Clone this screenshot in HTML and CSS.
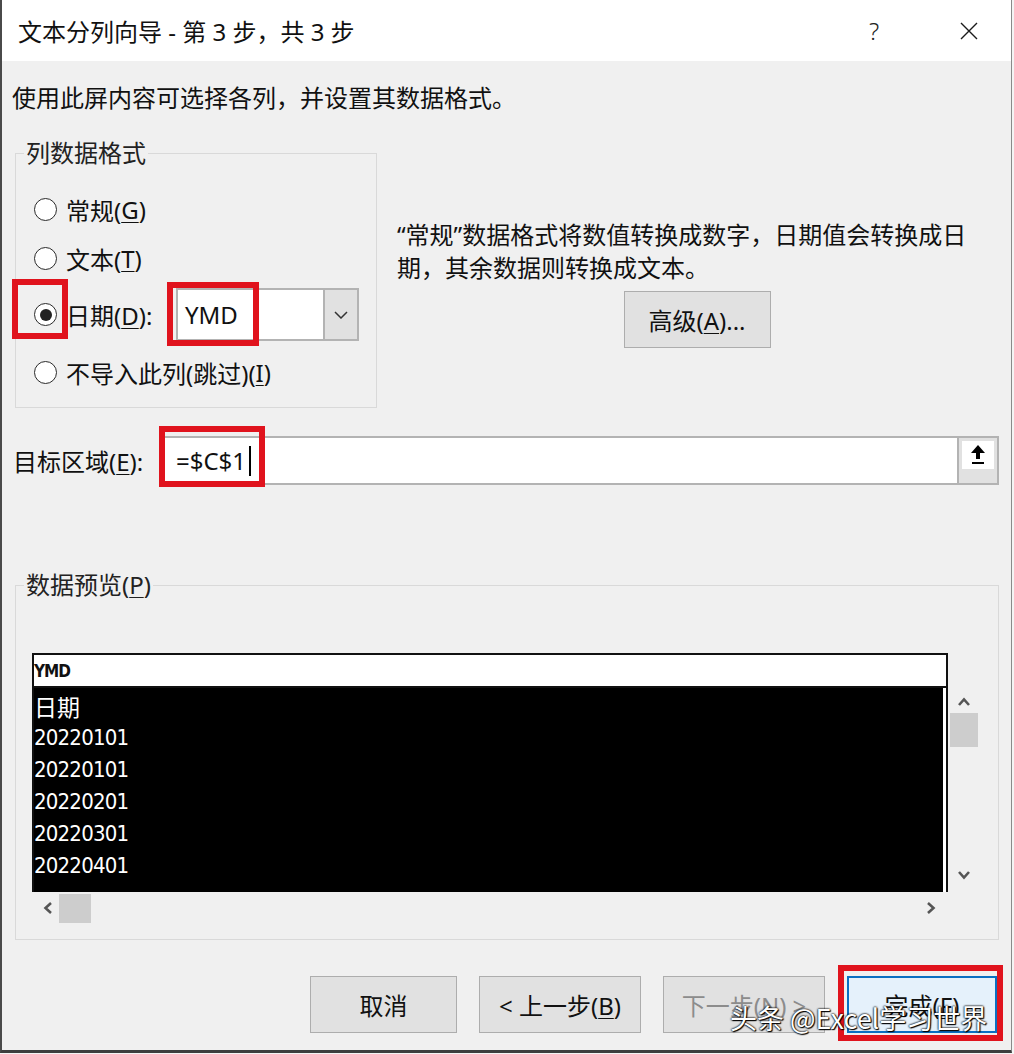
FILE: index.html
```html
<!DOCTYPE html>
<html lang="zh-CN">
<head>
    <meta charset="UTF-8">
    <title>文本分列向导 - 第 3 步，共 3 步</title>
    <link rel="stylesheet" href="styles.css">
</head>
<body>
    <div class="dialog">
        <div class="titlebar">
            <span class="title">文本分列向导 - 第 3 步，共 3 步</span>
            <span class="help">?</span>
            <span class="close">
                <svg width="20" height="18" viewBox="0 0 20 18"><path d="M2 1 L18 17 M18 1 L2 17" stroke="#1b1b1b" stroke-width="1.4" fill="none"/></svg>
            </span>
        </div>

        <div class="content">
            <p class="intro">使用此屏内容可选择各列，并设置其数据格式。</p>

            <div class="format-row">
                <fieldset class="group format-group">
                    <legend>列数据格式</legend>
                    <div class="radio-row row-a"><span class="radio"></span>常规(<u>G</u>)</div>
                    <div class="radio-row row-b"><span class="radio"></span>文本(<u>T</u>)</div>
                    <div class="radio-row row-c">
                        <span class="radio checked mark-radio"></span>
                        <span class="date-label">日期(<u>D</u>):</span>
                        <div class="combo">
                            <span class="combo-text">YMD</span>
                            <span class="combo-btn">
                                <svg width="14" height="8" viewBox="0 0 14 8"><path d="M1 1 L7 7 L13 1" stroke="#333" stroke-width="1.5" fill="none"/></svg>
                            </span>
                        </div>
                    </div>
                    <div class="radio-row row-d"><span class="radio"></span>不导入此列(跳过)(<u>I</u>)</div>
                </fieldset>

                <div class="format-note">
                    <p>“常规”数据格式将数值转换成数字，日期值会转换成日期，其余数据则转换成文本。</p>
                    <button class="btn btn-adv">高级(<u>A</u>)...</button>
                </div>
            </div>

            <div class="dest-row">
                <span class="dest-label">目标区域(<u>E</u>):</span>
                <div class="dest-input">
                    <span class="dest-text">=$C$1</span><span class="caret"></span>
                    <span class="collapse-btn">
                        <span class="collapse-face">
                            <svg width="20" height="24" viewBox="0 0 20 24"><path d="M10 2 L3 10 L8 10 L8 16 L12 16 L12 10 L17 10 Z" fill="#000"/><rect x="4" y="19" width="12" height="2" fill="#000"/></svg>
                        </span>
                    </span>
                </div>
            </div>

            <fieldset class="group preview-group">
                <legend>数据预览(<u>P</u>)</legend>
                <div class="preview">
                    <div class="preview-grid">
                        <div class="preview-head">YMD</div>
                        <div class="preview-body">
                            <div class="cell cell-cjk">日期</div>
                            <div class="cell">20220101</div>
                            <div class="cell">20220101</div>
                            <div class="cell">20220201</div>
                            <div class="cell">20220301</div>
                            <div class="cell">20220401</div>
                        </div>
                    </div>
                    <div class="vscroll">
                        <svg width="14" height="10" viewBox="0 0 14 10"><path d="M2 8 L7 2.5 L12 8" stroke="#555" stroke-width="2.6" fill="none"/></svg>
                        <span class="vthumb"></span>
                        <span class="vspace"></span>
                        <svg width="14" height="10" viewBox="0 0 14 10"><path d="M2 2 L7 7.5 L12 2" stroke="#555" stroke-width="2.6" fill="none"/></svg>
                    </div>
                </div>
                <div class="hscroll">
                    <svg width="10" height="14" viewBox="0 0 10 14"><path d="M8 2 L2.5 7 L8 12" stroke="#555" stroke-width="2.6" fill="none"/></svg>
                    <span class="hthumb"></span>
                    <span class="hspace"></span>
                    <svg width="10" height="14" viewBox="0 0 10 14"><path d="M2 2 L7.5 7 L2 12" stroke="#555" stroke-width="2.6" fill="none"/></svg>
                </div>
            </fieldset>

            <div class="buttons">
                <button class="btn btn-cancel">取消</button>
                <button class="btn btn-back">&lt; 上一步(<u>B</u>)</button>
                <button class="btn btn-next" disabled>下一步(<u>N</u>) &gt;</button>
                <button class="btn btn-finish">完成(<u>F</u>)</button>
            </div>
        </div>

        <div class="watermark">头条 @Excel学习世界</div>
    </div>
</body>
</html>
```

FILE: styles.css
```css
body {
    margin: 0;
    background: #f4f4f4;
    font-family: "Noto Sans", "Noto Sans CJK SC", sans-serif;
    color: #111;
}
u {
    text-decoration-thickness: 1px;
    text-underline-offset: 3px;
}
.dialog {
    position: relative;
    width: 1009px;
    height: 1050px;
    border-left: 2px solid #4a4a4a;
    border-right: 1px solid #8a8a8a;
    border-bottom: 3px solid #3e3e3e;
    background: #f0f0f0;
    overflow: hidden;
}

/* title bar */
.titlebar {
    height: 61px;
    background: #fff;
    display: flex;
    align-items: center;
    padding-left: 16px;
}
.title {
    font-size: 24px;
    flex: 1;
}
.help {
    font-size: 24px;
    font-weight: 300;
    color: #222;
    width: 90px;
}
.close {
    width: 52px;
    display: flex;
    align-items: center;
}

/* body */
.content {
    padding: 0 12px 0 13px;
}
.intro {
    margin: 20px 0 0 -3px;
    font-size: 24px;
    line-height: 34px;
}
.format-row {
    display: flex;
    margin-top: 23px;
}
.group {
    margin: 0;
    border: 1px solid #d9d9d9;
    padding: 0;
}
.group legend {
    font-size: 24px;
    line-height: 30px;
    padding: 0 2px;
    color: #222;
}
.format-group {
    width: 362px;
    box-sizing: border-box;
    height: 270px;
    padding: 17px 0 0 18px;
}
.format-group legend {
    margin-left: -10px;
}
.radio-row {
    display: flex;
    align-items: center;
    font-size: 24px;
}
.row-a, .row-b {
    height: 49px;
}
.row-c {
    height: 63px;
}
.row-d {
    height: 53px;
}
.radio {
    position: relative;
    width: 21px;
    height: 21px;
    border: 1.6px solid #2a2a2a;
    border-radius: 50%;
    background: #fff;
    margin-right: 9px;
    display: flex;
    align-items: center;
    justify-content: center;
}
.radio.checked::before {
    content: '';
    width: 12px;
    height: 12px;
    border-radius: 50%;
    background: #222;
}
.mark-radio::after {
    content: '';
    position: absolute;
    left: -23px;
    top: -25px;
    width: 44px;
    height: 48px;
    border: 6px solid #e0131d;
}
.date-label {
    width: 110px;
}
.combo {
    position: relative;
    display: flex;
    width: 183px;
    height: 53px;
    box-sizing: border-box;
    border: 2px solid #b3b3b3;
    background: #fff;
}
.combo::after {
    content: '';
    position: absolute;
    left: -11px;
    top: -8px;
    width: 80px;
    height: 52px;
    border: 6px solid #e0131d;
}
.combo-text {
    flex: 1;
    font-size: 24px;
    line-height: 49px;
    padding-left: 7px;
}
.combo-btn {
    width: 32px;
    background: #e1e1e1;
    border-left: 2px solid #b3b3b3;
    display: flex;
    align-items: center;
    justify-content: center;
}
.format-note {
    width: 600px;
    margin: 80px 0 0 20px;
    display: flex;
    flex-direction: column;
    align-items: center;
}
.format-note p {
    margin: 0;
    width: 580px;
    align-self: flex-start;
    font-size: 24px;
    line-height: 33px;
}
.btn {
    font-family: inherit;
    font-size: 24px;
    color: #111;
    background: #e1e1e1;
    border: 1px solid #adadad;
    padding: 0;
}
.btn-adv {
    margin-top: 7px;
    width: 147px;
    height: 57px;
}

/* destination */
.dest-row {
    display: flex;
    align-items: center;
    margin-top: 28px;
}
.dest-label {
    width: 146px;
    font-size: 24px;
    margin-left: -2px;
    margin-right: 3px;
}
.dest-input {
    position: relative;
    flex: 1;
    height: 49px;
    box-sizing: border-box;
    border: 2px solid #b3b3b3;
    background: #fff;
    display: flex;
    align-items: center;
}
.dest-input::after {
    content: '';
    position: absolute;
    left: -5px;
    top: -12px;
    width: 94px;
    height: 49px;
    border: 6px solid #e0131d;
}
.dest-text {
    font-size: 24px;
    padding-left: 12px;
}
.caret {
    width: 2px;
    height: 30px;
    background: #000;
    margin-left: 3px;
}
.collapse-btn {
    margin-left: auto;
    width: 40px;
    height: 45px;
    background: #e1e1e1;
    border-left: 2px solid #b3b3b3;
    display: flex;
    justify-content: center;
    padding-top: 3px;
    box-sizing: border-box;
}
.collapse-face {
    width: 32px;
    height: 28px;
    background: #fff;
    display: flex;
    align-items: center;
    justify-content: center;
}

/* preview */
.preview-group {
    margin-top: 85px;
    height: 370px;
    box-sizing: border-box;
    padding: 53px 16px 0 16px;
}
.preview-group legend {
    margin-left: -8px;
}
.preview {
    display: flex;
}
.preview-grid {
    width: 912px;
    border: 2px solid #111;
    border-bottom: 0;
    background: #fff;
}
.preview-head {
    height: 31px;
    border-bottom: 2px solid #111;
    font-family: "Liberation Sans Narrow", "DejaVu Sans Condensed", "Liberation Sans", sans-serif;
    font-weight: bold;
    font-size: 17px;
    line-height: 33px;
    letter-spacing: -1px;
}
.preview-body {
    height: 204px;
    margin-right: 3px;
    background: #000;
    color: #fff;
    padding-top: 2px;
    box-sizing: border-box;
}
.cell {
    height: 32px;
    line-height: 32px;
    font-family: "Liberation Sans Narrow", "DejaVu Sans Condensed", "Liberation Sans", sans-serif;
    font-size: 22px;
    letter-spacing: -0.8px;
}
.cell-cjk {
    font-family: "Noto Sans CJK SC", sans-serif;
    font-size: 23px;
    letter-spacing: 0;
}
.vscroll {
    width: 32px;
    margin-top: 33px;
    height: 206px;
    display: flex;
    flex-direction: column;
    align-items: center;
    padding-top: 11px;
    box-sizing: border-box;
}
.vthumb {
    margin-top: 6px;
    width: 28px;
    height: 34px;
    background: #cdcdcd;
}
.vspace {
    flex: 1;
}
.vscroll svg:last-child {
    margin-bottom: 12px;
}
.hscroll {
    width: 916px;
    height: 32px;
    display: flex;
    align-items: center;
    padding-left: 11px;
    padding-right: 12px;
    box-sizing: border-box;
}
.hthumb {
    margin-left: 6px;
    width: 32px;
    height: 29px;
    background: #cdcdcd;
}
.hspace {
    flex: 1;
}

/* buttons */
.buttons {
    display: flex;
    gap: 22px;
    margin: 36px 0 0 295px;
}
.buttons .btn {
    height: 57px;
}
.btn-cancel {
    width: 147px;
}
.btn-back, .btn-next {
    width: 162px;
}
.btn-next {
    color: #8c8c8c;
}
.btn-finish {
    position: relative;
    width: 150px;
    background: #e5f1fb;
    border: 2px solid #0a6fc2;
}
.btn-finish::after {
    content: '';
    position: absolute;
    left: -11px;
    top: -13px;
    right: -8px;
    bottom: -10px;
    border: 6px solid #e0131d;
}

/* watermark over the dialog */
.watermark {
    position: absolute;
    left: 728px;
    top: 1000px;
    font-family: "Noto Sans CJK SC", sans-serif;
    font-size: 27px;
    line-height: 36px;
    color: #fff;
    text-shadow: 0 0 2px #000, 0 0 2px #000, 1px 1px 1px #000;
}
```
